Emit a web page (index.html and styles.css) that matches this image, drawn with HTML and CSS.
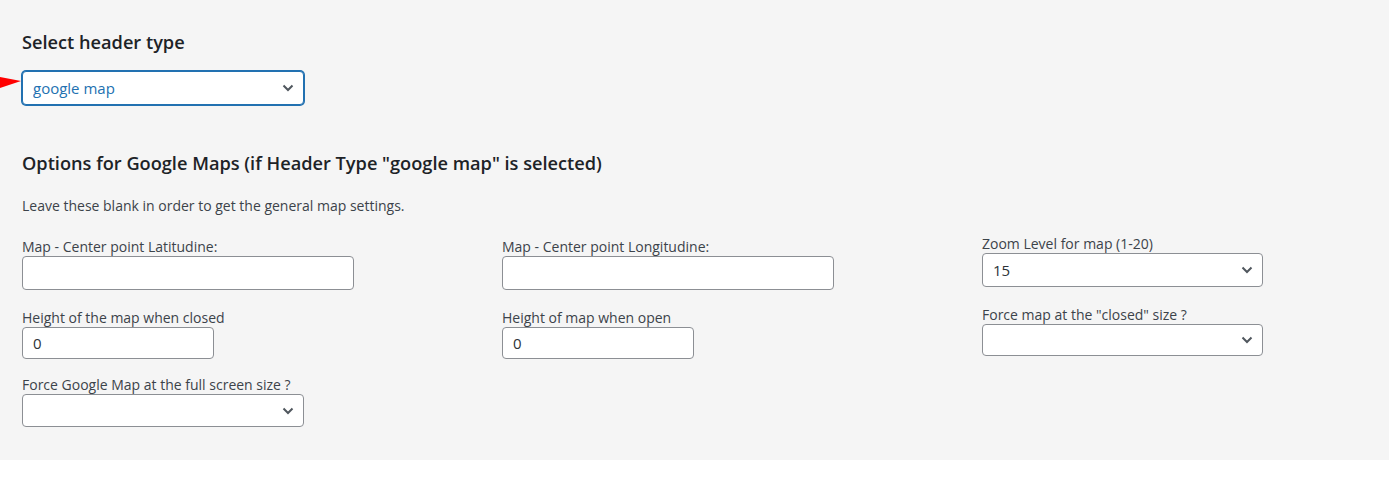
FILE: index.html
```html
<!DOCTYPE html>
<html lang="en">
<head>
    <meta charset="UTF-8">
    <meta name="viewport" content="width=device-width, initial-scale=1.0">
    <title>Header settings</title>
    <link rel="stylesheet" href="styles.css">
</head>
<body>
    <div class="panel">
        <h3 class="section-title">Select header type</h3>
        <div class="type-row">
            <svg class="pointer" width="22" height="14" viewBox="0 0 22 14"><polygon points="0,2 21,6 0,13" fill="#ff0000"/></svg>
            <div class="select-wrap wide focused">
                <select class="field">
                    <option>google map</option>
                </select>
                <svg class="chevron" width="12" height="8" viewBox="0 0 12 8"><path d="M1.5 1.5 L6 6 L10.5 1.5" fill="none" stroke="#50575e" stroke-width="2"/></svg>
            </div>
        </div>

        <h3 class="section-title options-title">Options for Google Maps (if Header Type "google map" is selected)</h3>
        <p class="desc">Leave these blank in order to get the general map settings.</p>

        <div class="grid">
            <div class="col">
                <div class="group">
                    <label>Map - Center point Latitudine:</label>
                    <input class="field text-long" type="text" value="">
                </div>
                <div class="group tight">
                    <label>Height of the map when closed</label>
                    <input class="field text-short sm" type="text" value="0">
                </div>
                <div class="group">
                    <label>Force Google Map at the full screen size ?</label>
                    <div class="select-wrap wide">
                        <select class="field md"><option></option></select>
                        <svg class="chevron" width="12" height="8" viewBox="0 0 12 8"><path d="M1.5 1.5 L6 6 L10.5 1.5" fill="none" stroke="#50575e" stroke-width="2"/></svg>
                    </div>
                </div>
            </div>
            <div class="col">
                <div class="group">
                    <label>Map - Center point Longitudine:</label>
                    <input class="field text-long" type="text" value="">
                </div>
                <div class="group">
                    <label>Height of map when open</label>
                    <input class="field text-short sm" type="text" value="0">
                </div>
            </div>
            <div class="col col-right">
                <div class="group">
                    <label>Zoom Level for map (1-20)</label>
                    <div class="select-wrap mid">
                        <select class="field"><option>15</option></select>
                        <svg class="chevron" width="12" height="8" viewBox="0 0 12 8"><path d="M1.5 1.5 L6 6 L10.5 1.5" fill="none" stroke="#50575e" stroke-width="2"/></svg>
                    </div>
                </div>
                <div class="group">
                    <label>Force map at the "closed" size ?</label>
                    <div class="select-wrap mid">
                        <select class="field sm"><option></option></select>
                        <svg class="chevron" width="12" height="8" viewBox="0 0 12 8"><path d="M1.5 1.5 L6 6 L10.5 1.5" fill="none" stroke="#50575e" stroke-width="2"/></svg>
                    </div>
                </div>
            </div>
        </div>
    </div>
</body>
</html>
```

FILE: styles.css
```css
body {
    margin: 0;
    background: #fff;
    font-family: "Open Sans", "Noto Sans", sans-serif;
    color: #3c434a;
}

.panel {
    background: #f5f5f5;
    height: 460px;
    box-sizing: border-box;
    padding: 29px 22px 0 22px;
}

.section-title {
    margin: 0;
    font-size: 18.2px;
    font-weight: 600;
    color: #1d2327;
    line-height: 26px;
}

.type-row {
    position: relative;
    margin-top: 16px;
}

.pointer {
    position: absolute;
    left: -22px;
    top: 4px;
}

.options-title {
    margin-top: 45px;
}

.desc {
    margin: 21px 0 0 0;
    font-size: 14px;
    line-height: 18px;
    color: #3c434a;
}

.grid {
    display: grid;
    grid-template-columns: 480px 480px 1fr;
    margin-top: 22px;
}

.col-right {
    margin-top: -3px;
}

.group {
    display: flex;
    flex-direction: column;
    align-items: flex-start;
    margin-bottom: 18px;
}

.group.tight {
    margin-bottom: 16px;
}

.group label {
    font-size: 14px;
    line-height: 19px;
    color: #3c434a;
}

.field {
    box-sizing: border-box;
    height: 34px;
    margin: 0;
    padding: 0 8px 0 10px;
    border: 1px solid #8c8f94;
    border-radius: 4px;
    background: #fff;
    font-family: inherit;
    font-size: 15px;
    color: #2c3338;
    outline: none;
    box-shadow: none;
    -webkit-appearance: none;
    appearance: none;
}

.field.sm {
    height: 32px;
}

.field.md {
    height: 33px;
}

.text-long {
    width: 332px;
}

.text-short {
    width: 192px;
}

.select-wrap {
    position: relative;
    display: inline-block;
}

.select-wrap select {
    width: 100%;
    padding-right: 28px;
}

.select-wrap.wide {
    width: 282px;
}

.select-wrap.mid {
    width: 281px;
}

.select-wrap.focused select {
    border-color: #2271b1;
    box-shadow: 0 0 0 1px #2271b1;
    color: #2271b1;
}

.chevron {
    position: absolute;
    right: 10px;
    top: 50%;
    margin-top: -4px;
    pointer-events: none;
}
```
